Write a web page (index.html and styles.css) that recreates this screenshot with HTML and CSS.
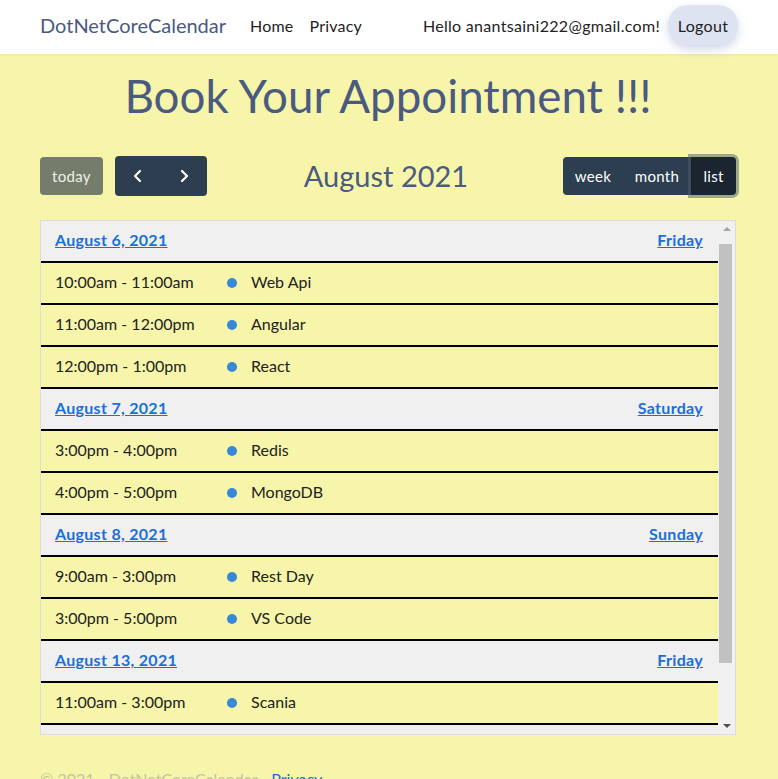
FILE: index.html
```html
<!DOCTYPE html>
<html lang="en">
<head>
<meta charset="utf-8">
<title>Book Your Appointment</title>
<link rel="stylesheet" href="styles.css">
</head>
<body>
<header class="navbar">
  <a class="brand" href="#">DotNetCoreCalendar</a>
  <nav class="nav-links">
    <a href="#">Home</a>
    <a href="#">Privacy</a>
  </nav>
  <div class="user">
    <span class="hello">Hello anantsaini222@gmail.com!</span>
    <button class="logout">Logout</button>
  </div>
</header>

<main class="main">
  <h1 class="title">Book Your Appointment !!!</h1>

  <div class="toolbar">
    <div class="tb-left">
      <button class="btn btn-today">today</button>
      <div class="btn-group">
        <button class="btn btn-dark btn-icon" aria-label="prev">
          <svg width="14" height="14" viewBox="0 0 14 14"><path d="M9 2 L4 7 L9 12" fill="none" stroke="#fff" stroke-width="2.2" stroke-linecap="round" stroke-linejoin="round"/></svg>
        </button>
        <button class="btn btn-dark btn-icon" aria-label="next">
          <svg width="14" height="14" viewBox="0 0 14 14"><path d="M5 2 L10 7 L5 12" fill="none" stroke="#fff" stroke-width="2.2" stroke-linecap="round" stroke-linejoin="round"/></svg>
        </button>
      </div>
    </div>
    <h2 class="month-title">August 2021</h2>
    <div class="btn-group views">
      <button class="btn btn-dark btn-week">week</button>
      <button class="btn btn-dark btn-month">month</button>
      <button class="btn btn-dark active">list</button>
    </div>
  </div>

  <div class="list-view">
    <div class="list-scroll">
      <div class="day"><a href="#">August 6, 2021</a><a href="#">Friday</a></div>
      <div class="event"><span class="time">10:00am - 11:00am</span><span class="dot"></span><span class="ev-title">Web Api</span></div>
      <div class="event"><span class="time">11:00am - 12:00pm</span><span class="dot"></span><span class="ev-title">Angular</span></div>
      <div class="event"><span class="time">12:00pm - 1:00pm</span><span class="dot"></span><span class="ev-title">React</span></div>
      <div class="day"><a href="#">August 7, 2021</a><a href="#">Saturday</a></div>
      <div class="event"><span class="time">3:00pm - 4:00pm</span><span class="dot"></span><span class="ev-title">Redis</span></div>
      <div class="event"><span class="time">4:00pm - 5:00pm</span><span class="dot"></span><span class="ev-title">MongoDB</span></div>
      <div class="day"><a href="#">August 8, 2021</a><a href="#">Sunday</a></div>
      <div class="event"><span class="time">9:00am - 3:00pm</span><span class="dot"></span><span class="ev-title">Rest Day</span></div>
      <div class="event"><span class="time">3:00pm - 5:00pm</span><span class="dot"></span><span class="ev-title">VS Code</span></div>
      <div class="day"><a href="#">August 13, 2021</a><a href="#">Friday</a></div>
      <div class="event"><span class="time">11:00am - 3:00pm</span><span class="dot"></span><span class="ev-title">Scania</span></div>
      <div class="day day-hidden"></div>
    </div>
    <div class="scrollbar">
      <span class="arrow up"></span>
      <div class="track"><div class="thumb"></div></div>
      <span class="arrow down"></span>
    </div>
  </div>
</main>

<footer class="footer">
  &copy; 2021 - DotNetCoreCalendar - <a href="#">Privacy</a>
</footer>
</body>
</html>
```

FILE: styles.css
```css
* { box-sizing: border-box; }

html, body {
  margin: 0;
  padding: 0;
}

body {
  background: #f6f5a9;
  font-family: Lato, "Open Sans", sans-serif;
  color: #212529;
  height: 779px;
  overflow: hidden;
}

a { text-decoration: none; }

.navbar {
  background: #fff;
  height: 54px;
  padding: 0 40px 4px;
  display: flex;
  align-items: center;
  box-shadow: 0 1px 3px rgba(0,0,0,0.06);
}

.brand {
  font-size: 20px;
  color: #4a5a80;
  margin-right: 16px;
}

.nav-links {
  display: flex;
  flex: 1;
}

.nav-links a {
  color: #222;
  font-size: 16px;
  letter-spacing: 0.2px;
  padding: 0 8px;
}

.user {
  display: flex;
  align-items: center;
  gap: 8px;
}

.hello {
  font-size: 16px;
  letter-spacing: 0.3px;
  color: #222;
}

.logout {
  font-family: inherit;
  font-size: 16px;
  letter-spacing: 0.3px;
  color: #222;
  background: #dde3f1;
  border: none;
  border-radius: 20px;
  height: 40px;
  width: 70px;
  padding: 0;
  box-shadow: 0 4px 10px rgba(120,140,190,0.35);
}

.main {
  padding: 0 42px 0 40px;
}

.title {
  margin: 0;
  padding-top: 16px;
  height: 102px;
  text-align: center;
  font-weight: 400;
  font-size: 45.7px;
  color: #4a5a80;
  line-height: 52px;
}

.toolbar {
  display: flex;
  align-items: center;
  justify-content: space-between;
  height: 40px;
  margin-bottom: 24px;
}

.tb-left {
  display: flex;
  align-items: center;
  gap: 12px;
}

.btn {
  font-family: inherit;
  font-size: 15px;
  letter-spacing: 0.3px;
  color: #fff;
  border: none;
  height: 40px;
  padding: 0;
  border-radius: 4px;
  display: flex;
  align-items: center;
  justify-content: center;
}

.btn-today {
  background: #747c6c;
  color: #eef0ea;
  height: 38px;
  width: 63px;
}

.btn-group {
  display: flex;
}

.btn-dark {
  background: #2c3e50;
  border-radius: 0;
}

.btn-group .btn:first-child { border-radius: 4px 0 0 4px; }
.btn-group .btn:last-child { border-radius: 0 4px 4px 0; }

.btn-icon {
  width: 46px;
}

.month-title {
  margin: 0 0 2px;
  font-weight: 400;
  font-size: 29px;
  color: #4a5a80;
  padding-left: 2px;
}

.views .btn { height: 38px; }
.views .btn-week { width: 60px; }
.views .btn-month { width: 68px; }

.views .active {
  background: #1a252f;
  box-shadow: 0 0 0 3px rgba(76,91,106,0.5);
  border-radius: 4px;
  width: 45px;
}

.list-view {
  display: flex;
  border: 1px solid #dcdcdc;
  height: 515px;
  overflow: hidden;
  background: #f1f1f1;
}

.list-scroll {
  flex: 1;
  overflow: hidden;
}

.day {
  background: #f0f0f0;
  height: 42px;
  border-bottom: 2px solid #000;
  padding: 0 15px 3px 14px;
  display: flex;
  align-items: center;
  justify-content: space-between;
}

.day a {
  color: #1b6fd9;
  font-weight: 700;
  font-size: 16px;
  letter-spacing: 0.3px;
  text-decoration: underline;
}

.event {
  background: #f6f5a9;
  height: 42px;
  border-bottom: 2px solid #000;
  padding: 0 14px 3px;
  display: flex;
  align-items: center;
  font-size: 16px;
  color: #222;
}

.time {
  width: 172px;
}

.dot {
  width: 10px;
  height: 10px;
  border-radius: 50%;
  background: #3788d8;
  margin-right: 14px;
  margin-top: 2px;
}

.scrollbar {
  width: 17px;
  background: #f1f1f1;
  display: flex;
  flex-direction: column;
  align-items: center;
}

.arrow {
  width: 0;
  height: 0;
  border-left: 4px solid transparent;
  border-right: 4px solid transparent;
  margin: 6px 0;
}

.arrow.up { border-bottom: 4px solid #a3a3a3; }
.arrow.down { border-top: 4px solid #505050; }

.track {
  flex: 1;
  width: 100%;
  padding: 7px 2px 0 1px;
}

.thumb {
  width: 13px;
  height: 419px;
  background: #c1c1c1;
}

.footer {
  padding: 34px 40px 0;
  font-size: 16px;
  color: #c4c4a0;
}

.footer a { color: #1b6fd9; }
```
